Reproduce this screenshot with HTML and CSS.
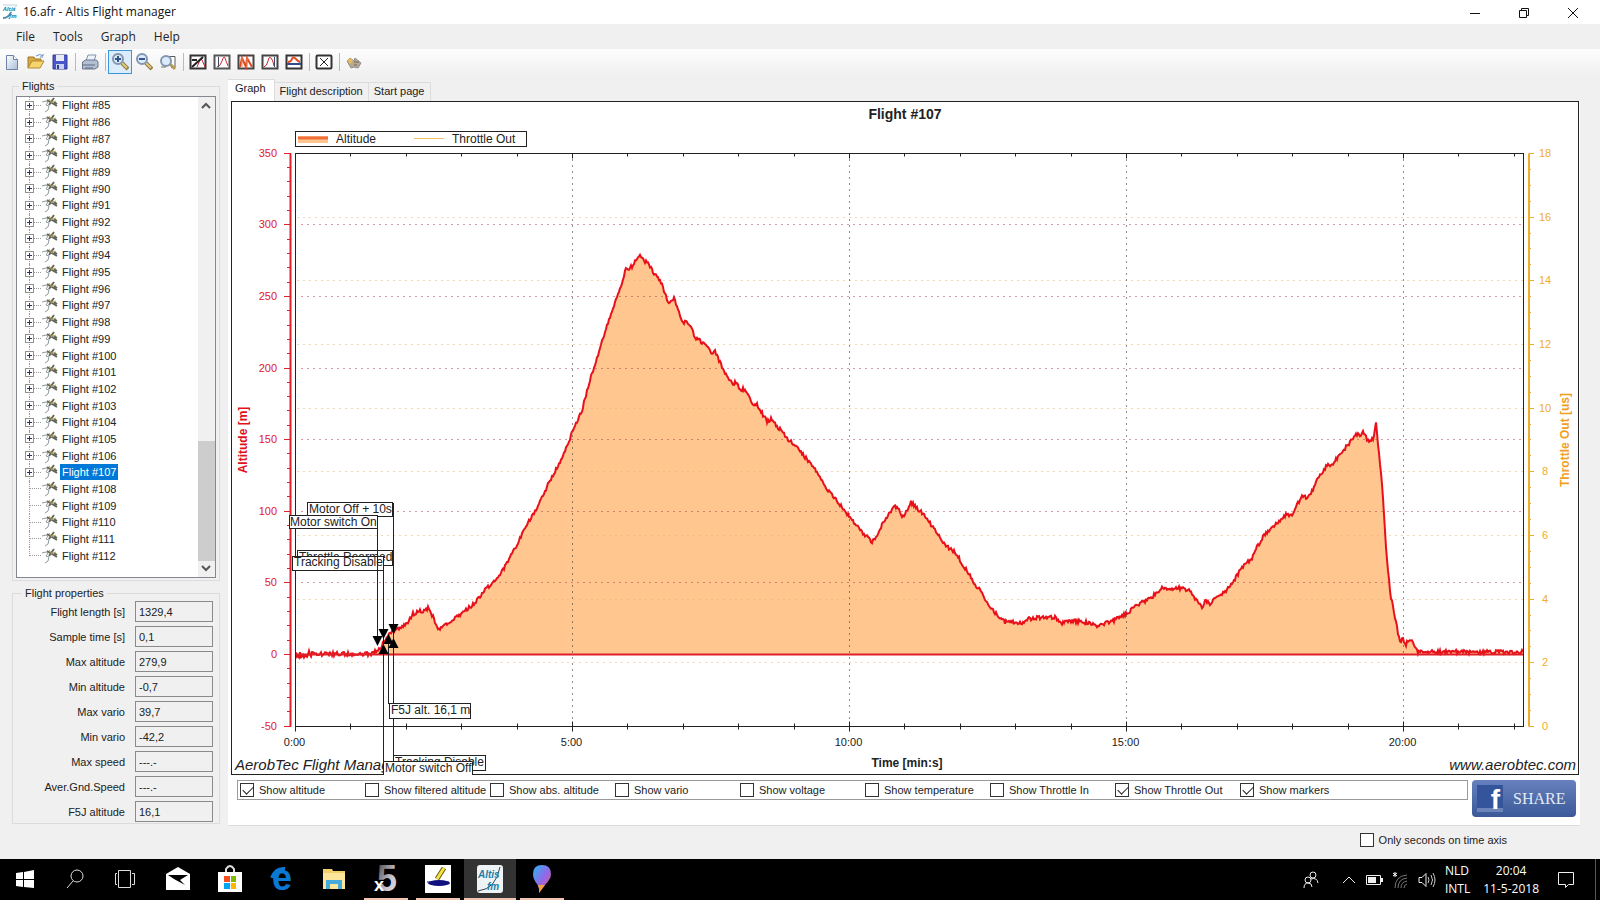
FILE: index.html
```
<!DOCTYPE html>
<html lang="en">

<head>
    <meta charset="utf-8">
    <title>16.afr - Altis Flight manager</title>
    <link rel="stylesheet" href="styles.css">
</head>

<body>
    <!-- shared icons -->
    <svg class="hide" width="0" height="0">
        <linearGradient id="gPage" x1="0" y1="0" x2="1" y2="1">
            <stop offset="0" stop-color="#fff"/><stop offset="1" stop-color="#a9bdd8"/>
        </linearGradient>
        <linearGradient id="gFive" x1="0" y1="0" x2="1" y2="1">
            <stop offset="0" stop-color="#333"/><stop offset="0.6" stop-color="#c6c6d2"/><stop offset="1" stop-color="#e6e6f2"/>
        </linearGradient>
        <linearGradient id="gPin" x1="0" y1="0" x2="1" y2="1">
            <stop offset="0" stop-color="#28b8f4"/><stop offset="0.5" stop-color="#8d6be8"/><stop offset="1" stop-color="#f0508c"/>
        </linearGradient>
        <symbol id="plane" viewBox="0 0 18 16">
            <path d="M1 5l4-1 2 1-2 3 3 1-1 4-3 2" fill="none" stroke="#8f9a9c"/>
            <path d="M6 3l10 6M8 8l5-7M13 5l3 2" fill="none" stroke="#66685a" stroke-width="2"/>
            <path d="M8 2l3 4M12 5l3-1" fill="none" stroke="#b9a94a"/>
        </symbol>
        <symbol id="logo" viewBox="0 0 16 16">
            <path d="M1 1h14L3 15" fill="none" stroke="#b9d4df"/>
            <text x="1" y="7" font-size="6" font-weight="bold" font-style="italic" fill="#1c7fa8">Altis</text>
            <path d="M1 14q6 0 8-6" fill="none" stroke="#4c8fb0" stroke-width="2"/>
            <text x="7" y="14" font-size="6" font-weight="bold" font-style="italic" fill="#1c7fa8">fm</text>
        </symbol>
        <symbol id="lens" viewBox="0 0 18 18">
            <path d="M11 10l6 6" stroke="#8d7a48" stroke-width="4"/>
            <path d="M11 10l5 5" stroke="#e5c878" stroke-width="2"/>
            <circle cx="7" cy="6" r="5" fill="#dcebfb" stroke="#8296b0" stroke-width="2"/>
        </symbol>
    </svg>

    <header class="titlebar">
        <svg class="app-icon" width="16" height="16"><use href="#logo"/></svg>
        <span class="title">16.afr - Altis Flight manager</span>
        <button type="button" aria-label="Minimize"><svg width="12" height="12"><path d="M1 6.500h10" stroke="#111"/></svg></button>
        <button type="button" aria-label="Restore"><svg width="12" height="12"><path d="M1.500 3.500h7v7h-7zM3.500 3.500v-2h7v7h-2" fill="none" stroke="#111"/></svg></button>
        <button type="button" aria-label="Close"><svg width="12" height="12"><path d="M1 1l10 10M11 1l-10 10" stroke="#111"/></svg></button>
    </header>

    <nav class="menu">
        <button type="button">File</button>
        <button type="button">Tools</button>
        <button type="button">Graph</button>
        <button type="button">Help</button>
    </nav>

    <div class="toolbar">
        <button type="button" aria-label="New"><svg width="18" height="18"><path d="M3.500 2.500h7l4 4v10h-11z" fill="url(#gPage)" stroke="#6d83a6"/><path d="M10.500 2.500v4h4" fill="#fff" stroke="#6d83a6"/></svg></button>
        <button type="button" aria-label="Open"><svg width="18" height="18"><path d="M1 15V4h6l1 2h6v3" fill="#d9a93c" stroke="#9c7a2c"/><path d="M1 15l4-7h12l-4 7z" fill="#f8d56c" stroke="#b08a34"/><path d="M9 3q4-3 7 0v-2m0 3h-3" fill="none" stroke="#6d8fc4"/></svg></button>
        <button type="button" aria-label="Save"><svg width="18" height="18"><path d="M2 2h14v14H2z" fill="#4a55c8" stroke="#343c92"/><path d="M5 2h8v6H5z" fill="#e8ecfa"/><path d="M5 11h8v5H5z" fill="#c9cff0"/><path d="M6 12h2v4H6z" fill="#343c92"/></svg></button>
        <i class="sep"></i>
        <button type="button" aria-label="Print"><svg width="18" height="18"><path d="M5 8l2-6h8l-2 6z" fill="#eef3fb" stroke="#8491a8"/><path d="M1.500 9l3-2h11l1.500 2v5l-3 2h-12.500z" fill="#b4c0d2" stroke="#68758c"/><path d="M2 12h12M4 15h8" stroke="#5c6880"/></svg></button>
        <i class="sep"></i>
        <button type="button" class="on" aria-label="Zoom in"><svg width="18" height="18"><use href="#lens"/><path d="M4 6h6M7 3v6" stroke="#33558c" stroke-width="2"/></svg></button>
        <button type="button" aria-label="Zoom out"><svg width="18" height="18"><use href="#lens"/><path d="M4 6h6" stroke="#33558c" stroke-width="2"/></svg></button>
        <button type="button" aria-label="Zoom all"><svg width="18" height="18"><path d="M8 3.500h8v11h-4" fill="#fff" stroke="#5b5b5b"/><path d="M11 11l5 5" stroke="#b89b54" stroke-width="3"/><circle cx="7" cy="8" r="5" fill="#dcebfb" stroke="#8296b0" stroke-width="2"/><path d="M2 14h5" stroke="#777"/></svg></button>
        <i class="sep"></i>
        <button type="button" aria-label="Altitude graph"><svg width="18" height="18"><path d="M1.500 2.500h15v13h-15z" fill="#fff" stroke="#333" stroke-width="2"/><path d="M8 14l3-7q1-3 2 0l3 7" fill="none" stroke="#d02030"/><path d="M3 14L14 4M3 7h5" stroke="#222" stroke-width="2"/></svg></button>
        <button type="button" aria-label="Graph start"><svg width="18" height="18"><path d="M1.500 2.500h15v13h-15z" fill="#fff" stroke="#555" stroke-width="2"/><path d="M4 14q3 0 5-6t3-3 3 8" fill="none" stroke="#d02030"/><path d="M5.500 4v10" stroke="#446"/></svg></button>
        <button type="button" aria-label="Graph peaks"><svg width="18" height="18"><path d="M1.500 2.500h15v13h-15z" fill="#fff" stroke="#444" stroke-width="2"/><path d="M3 14l2-9 4 9 1-9 5 9" fill="none" stroke="#e04a20" stroke-width="2"/><path d="M5 4v10M10 4v10" stroke="#e88a60"/></svg></button>
        <button type="button" aria-label="Graph end"><svg width="18" height="18"><path d="M1.500 2.500h15v13h-15z" fill="#fff" stroke="#444" stroke-width="2"/><path d="M3 14q3-1 4-6t3-3 3 8" fill="none" stroke="#d02030"/><path d="M13.500 4v10" stroke="#446"/></svg></button>
        <button type="button" aria-label="Graph section"><svg width="18" height="18"><path d="M1.500 2.500h15v13h-15z" fill="#fff" stroke="#333" stroke-width="2"/><path d="M3 9q3 0 4-3t4 0 4 3" fill="none" stroke="#e04a20" stroke-width="2"/><path d="M2 11h14" stroke="#334a90" stroke-width="2"/></svg></button>
        <i class="sep"></i>
        <button type="button" aria-label="Clear"><svg width="18" height="18"><rect x="1.500" y="2.500" width="15" height="13" rx="1" fill="#fff" stroke="#333" stroke-width="2"/><path d="M5 5l8 8M13 5l-8 8" stroke="#222"/></svg></button>
        <i class="sep"></i>
        <button type="button" aria-label="Device"><svg width="18" height="18"><path d="M2 8l3-3 4 3 1-3 6 5-3 5-4-1-3 1z" fill="#b9a98a" stroke="#8d8d94"/><path d="M2 7l4-2 2 3-3 3z" fill="#e8bc5c"/><path d="M9 9h5M9 12h3" stroke="#667"/></svg></button>
    </div>

    <main class="main">
        <aside class="side">
            <fieldset>
                <legend>Flights</legend>
                <div class="tree">
                    <ul id="flightList"></ul>
                    <div class="scroll">
                        <svg width="16" height="16"><path d="M4 11l4-4 4 4" fill="none" stroke="#555" stroke-width="2"/></svg>
                        <div class="thumb"></div>
                        <svg width="16" height="16"><path d="M4 5l4 4 4-4" fill="none" stroke="#555" stroke-width="2"/></svg>
                    </div>
                </div>
            </fieldset>
            <fieldset class="props">
                <legend>Flight properties</legend>
                <label for="length">Flight length [s]</label><input type="text" id="length" value="1329,4" readonly>
                <label for="sample">Sample time [s]</label><input type="text" id="sample" value="0,1" readonly>
                <label for="maxAlt">Max altitude</label><input type="text" id="maxAlt" value="279,9" readonly>
                <label for="minAlt">Min altitude</label><input type="text" id="minAlt" value="-0,7" readonly>
                <label for="maxVario">Max vario</label><input type="text" id="maxVario" value="39,7" readonly>
                <label for="minVario">Min vario</label><input type="text" id="minVario" value="-42,2" readonly>
                <label for="maxSpeed">Max speed</label><input type="text" id="maxSpeed" value="---.-" readonly>
                <label for="avgSpeed">Aver.Gnd.Speed</label><input type="text" id="avgSpeed" value="---.-" readonly>
                <label for="f5j">F5J altitude</label><input type="text" id="f5j" value="16,1" readonly>
            </fieldset>
        </aside>

        <section class="content">
            <div class="tabs">
                <button type="button" class="active">Graph</button>
                <button type="button">Flight description</button>
                <button type="button">Start page</button>
            </div>
            <div class="panel">
                <svg id="chart" class="chart" viewBox="231 101 1348 674"></svg>
                <div class="options">
                    <div class="checks">
                        <label><input type="checkbox" checked>Show altitude</label>
                        <label><input type="checkbox">Show filtered altitude</label>
                        <label><input type="checkbox">Show abs. altitude</label>
                        <label><input type="checkbox">Show vario</label>
                        <label><input type="checkbox">Show voltage</label>
                        <label><input type="checkbox">Show temperature</label>
                        <label><input type="checkbox">Show Throttle In</label>
                        <label><input type="checkbox" checked>Show Throttle Out</label>
                        <label><input type="checkbox" checked>Show markers</label>
                    </div>
                    <button type="button" class="share"><span class="fb">f</span>SHARE</button>
                </div>
            </div>
            <div class="seconds">
                <label><input type="checkbox">Only seconds on time axis</label>
            </div>
        </section>
    </main>

    <footer class="taskbar">
        <button type="button" class="sys" aria-label="Start"><svg width="18" height="18"><path d="M0 3l7-1v7H0zM8 2l10-2v9H8zM0 10h7v7l-7-1zM8 10h10v8l-10-1z" fill="#fff"/></svg></button>
        <button type="button" class="sys" aria-label="Search"><svg width="18" height="20"><circle cx="11" cy="7" r="6" fill="none" stroke="#ddd"/><path d="M7 12l-6 7" stroke="#ddd"/></svg></button>
        <button type="button" class="sys" aria-label="Task view"><svg width="20" height="18"><path d="M3.500 .5h12v17h-12zM2 3.500H.5v11H2M17 3.500h2.500v11H17" fill="none" stroke="#ddd"/></svg></button>
        <button type="button" class="first" aria-label="Mail"><svg width="26" height="24"><path d="M1 7l12-7 12 7v16H1z" fill="#fff"/><path d="M3 8h20l-8 5 5 5-11-6z" fill="#000"/></svg></button>
        <button type="button" aria-label="Store"><svg width="26" height="28"><path d="M9 8V4q4-6 8 0v4" fill="none" stroke="#ddd" stroke-width="2"/><path d="M1 7h24v20H1z" fill="#fff"/><path d="M7 11h6v6H7z" fill="#f25022"/><path d="M14 11h5v6h-5z" fill="#7fba00"/><path d="M7 18h6v6H7z" fill="#00a4ef"/><path d="M14 18h5v6h-5z" fill="#ffb900"/></svg></button>
        <button type="button" aria-label="Edge"><svg width="26" height="40"><text x="3" y="31" font-size="36" font-weight="bold" fill="#0a78d4">e</text><path d="M3 19q4-10 13-9" fill="none" stroke="#0a78d4" stroke-width="4"/></svg></button>
        <button type="button" aria-label="Explorer"><svg width="24" height="24"><path d="M1 2h9l1 2h12v18H1z" fill="#f5cf6b"/><path d="M1 6h22v16H1z" fill="#fde69b"/><path d="M4 22v-9h16v9h-4v-5H8v5z" fill="#45aadc"/></svg></button>
        <button type="button" class="run" aria-label="XFLR5"><svg width="26" height="40"><text x="4" y="32" font-size="36" font-weight="bold" fill="url(#gFive)">5</text><text x="1" y="32" font-size="18" font-weight="bold" fill="#fff">x</text></svg></button>
        <button type="button" class="run" aria-label="Editor"><svg width="26" height="30"><path d="M0 1h26v28H0z" fill="#fff"/><ellipse cx="14" cy="19" rx="11" ry="3" fill="#101080"/><path d="M2 18h22" stroke="#101080"/><path d="M12 15l7-11" stroke="#665a10" stroke-width="5"/><path d="M12 15l7-11" stroke="#f4e040" stroke-width="3"/></svg></button>
        <button type="button" class="run current" aria-label="Altis"><svg width="26" height="30"><rect y="1" width="26" height="28" rx="3" fill="#eef4f6"/><path d="M23 3q-4 22-22 24" fill="none" stroke="#345" stroke-width="1"/><text x="1" y="14" font-size="10" font-weight="bold" font-style="italic" fill="#1c7fa8">Altis</text><text x="10" y="26" font-size="10" font-weight="bold" font-style="italic" fill="#1c7fa8">fm</text></svg></button>
        <button type="button" class="run" aria-label="Paint 3D"><svg width="20" height="30"><path d="M10 1q9 0 9 9 0 5-6 11l-6 8q1-4-2-9-4-5-4-10 0-9 9-9z" fill="url(#gPin)"/><path d="M7 29q1-4-1-8l7 0z" fill="#f4a03c"/></svg></button>

        <div class="tray">
            <svg width="18" height="18"><g fill="none" stroke="#eee" stroke-width="1"><circle cx="11" cy="4" r="3"/><circle cx="6" cy="9" r="3"/><path d="M2 17q0-5 4-5t4 4M9 8q6-2 7 4"/></g></svg>
            <svg class="chev" width="16" height="16"><path d="M2 11l6-6 6 6" fill="none" stroke="#eee"/></svg>
            <svg width="17" height="12"><path d="M.5 1.500h14v9H.5z" fill="none" stroke="#eee"/><path d="M2 3h8v6H2zM15 4h2v4h-2z" fill="#eee"/></svg>
            <svg width="17" height="18"><g fill="none" stroke="#777"><path d="M3 17Q3 5 15 4M6 17q0-9 9-10M9 17q0-6 6-7M12 17q0-3 3-4"/></g><path d="M3 1v5M1 2l4 3M5 2L1 5" stroke="#fff"/></svg>
            <svg width="18" height="16"><path d="M1 5.500h3l4-4v13l-4-4H1z" fill="none" stroke="#eee"/><path d="M10 5q2 3 0 6M13 3q3 5 0 10M15 1q4 7 0 14" fill="none" stroke="#ccc"/></svg>
            <div class="lang">NLD<br>INTL</div>
            <div class="clock">20:04<br>11-5-2018</div>
            <svg width="18" height="18"><path d="M1.500 1.500h15v12h-5l-3 3v-3h-7z" fill="none" stroke="#eee"/></svg>
            <i class="desk"></i>
        </div>
    </footer>

    <script src="chart.js"></script>
</body>

</html>
```
FILE: styles.css
```
*{
    box-sizing: border-box;
}

body{
    margin: 0;
    min-height: 100vh;
    display: flex;
    flex-direction: column;
    background-color: #f0f0f0;
    color: #222;
    font-family: "Liberation Sans", Arial, sans-serif;
    font-size: 11px;
    line-height: 14px;
}

button{
    padding: 0;
    border: none;
    background: none;
    color: inherit;
    font: inherit;
}

svg{
    flex: none;
}

.hide{
    position: absolute;
}

/* title, menu, toolbar */
.titlebar{
    display: flex;
    align-items: center;
    height: 24px;
    padding: 0 3px 0 2px;
    background-color: #fff;
    font-family: "Open Sans", sans-serif;
    font-size: 12px;
    color: #111;
}

.title{
    flex: 1;
    margin-left: 5px;
}

.titlebar button{
    width: 49px;
    height: 24px;
}

.titlebar button svg{
    vertical-align: middle;
}

.menu{
    display: flex;
    height: 25px;
    padding-left: 7px;
    font-family: "Open Sans", sans-serif;
    font-size: 12px;
}

.menu button{
    padding: 0 9px;
}

.toolbar{
    display: flex;
    align-items: center;
    height: 26px;
    background: linear-gradient(#fdfdfd, #f0f0f0);
}

.toolbar button{
    display: flex;
    align-items: center;
    justify-content: center;
    width: 24px;
    height: 24px;
}

.toolbar .on{
    border: 1px solid #3c96dc;
    background-color: #dcecfa;
}

.sep{
    width: 1px;
    height: 18px;
    margin: 0 2px 0 3px;
    background-color: #bbb;
}

/* left side */
.main{
    display: flex;
    flex: 1;
    padding: 4px 20px 0 12px;
}

.side{
    width: 208px;
    margin-right: 8px;
}

fieldset{
    margin: 0 0 5px;
    padding: 3px 3px 2px;
    border: 1px solid #dcdcdc;
}

legend{
    margin-left: 3px;
    padding: 0 3px;
    height: 14px;
    text-align: left;
}

.tree{
    display: flex;
    height: 482px;
    border: 1px solid #828790;
    background-color: #fff;
}

.tree ul{
    flex: 1;
    display: grid;
    grid-auto-rows: 1fr;
    height: 467px;
    margin: 0;
    padding: 0 0 0 8px;
    list-style: none;
}

.tree li{
    position: relative;
    display: flex;
    align-items: center;
}

.tree li::before{
    content: "";
    position: absolute;
    left: 4px;
    top: 0;
    bottom: 0;
    border-left: 1px dotted #999;
}

.tree li:last-child::before{
    bottom: 50%;
}

.tree li::after{
    content: "";
    position: absolute;
    left: 4px;
    width: 12px;
    border-top: 1px dotted #999;
}

.expand{
    position: relative;
    z-index: 1;
    width: 9px;
    height: 9px;
    border: 1px solid #919191;
    background: linear-gradient(#335, #335) center / 5px 1px no-repeat, linear-gradient(#335, #335) center / 1px 5px no-repeat, #fff;
}

.none{
    width: 9px;
}

.plane{
    margin: 0 1px 0 7px;
}

.name{
    padding: 0 2px;
    line-height: 16px;
}

.selected .name{
    background-color: #0078d7;
    color: #fff;
}

.scroll{
    display: flex;
    flex-direction: column;
    width: 17px;
    background-color: #f0f0f0;
}

.thumb{
    height: 120px;
    margin-top: auto;
    background-color: #cdcdcd;
}

.props{
    display: grid;
    grid-template-columns: 1fr 78px;
    grid-auto-rows: 21px;
    gap: 4px 10px;
    padding: 1px 6px 1px;
    align-items: center;
    text-align: right;
}

.props input{
    width: 100%;
    height: 21px;
    padding: 0 3px;
    border: 1px solid #8a8a8a;
    background-color: #f0f0f0;
    color: #222;
    font: inherit;
}

/* graph side */
.content{
    flex: 1;
}

.tabs{
    display: flex;
    align-items: flex-end;
    height: 22px;
}

.tabs button{
    height: 19px;
    padding: 0 5px 3px;
    border: 1px solid #dcdcdc;
    border-left: none;
    border-bottom: none;
}

.tabs .active{
    height: 22px;
    padding: 0 8px 5px 7px;
    background-color: #fff;
}

.panel{
    padding: 0 1px 8px 3px;
    border-bottom: 1px solid #dcdcdc;
    background-color: #fff;
}

.chart{
    display: block;
    width: 100%;
    height: auto;
}

.options{
    display: flex;
    align-items: flex-start;
    gap: 4px;
    padding: 5px 3px 0 6px;
}

.checks{
    flex: 1;
    display: flex;
    height: 20px;
    padding-left: 2px;
    border: 1px solid #9a9a9a;
}

.checks label{
    width: 125px;
    white-space: nowrap;
}

label{
    display: flex;
    align-items: center;
}

.props label{
    justify-content: flex-end;
}

input[type=checkbox]{
    appearance: none;
    flex: none;
    width: 14px;
    height: 14px;
    margin: 0 5px 0 0;
    border: 1px solid #333;
    background-color: #fff;
}

input[type=checkbox]:checked::after{
    content: "";
    display: block;
    width: 9px;
    height: 5px;
    margin: 2px 0 0 2px;
    border-left: 1px solid #222;
    border-bottom: 1px solid #222;
    transform: rotate(-45deg);
}

.share{
    display: flex;
    align-items: center;
    width: 104px;
    height: 37px;
    padding-left: 5px;
    border-radius: 4px;
    background: linear-gradient(#6681bd, #3b5998);
    color: #e4eaf6;
    font-family: "Liberation Serif", serif;
    font-size: 16px;
}

.fb{
    width: 26px;
    height: 27px;
    margin-right: 10px;
    padding-right: 3px;
    border-bottom: 4px solid #6d84b8;
    background-color: #34559c;
    color: #fff;
    font: bold 28px/30px "Liberation Sans", Arial, sans-serif;
    text-align: right;
}

.seconds{
    display: flex;
    justify-content: flex-end;
    padding: 7px 73px 12px 0;
}

/* chart texts */
.chart text{
    font-size: 12px;
    fill: #222;
}

.chart .red{
    font-size: 11px;
    fill: #e0202c;
}

.chart .orange{
    font-size: 11px;
    fill: #f0ac2c;
}

.chart .time{
    font-size: 11px;
}

.chart .bold{
    font-weight: bold;
}

.chart .head{
    font-size: 14px;
    font-weight: bold;
}

.chart .brand{
    font-size: 15px;
    font-style: italic;
}

.chart .redtitle{
    font-weight: bold;
    fill: #e0101c;
}

.chart .orangetitle{
    font-weight: bold;
    fill: #f0a01c;
}

/* task bar */
.taskbar{
    display: flex;
    height: 42px;
    background-color: #000;
    color: #fff;
}

.taskbar button{
    display: flex;
    align-items: center;
    justify-content: center;
    width: 52px;
    border-bottom: 3px solid transparent;
}

.taskbar .sys{
    width: 50px;
}

.taskbar .first{
    margin-left: 2px;
}

.taskbar .run{
    width: 44px;
    margin: 0 4px;
    border-bottom-color: #f2c4b0;
}

.taskbar .current{
    width: 52px;
    margin: 0;
    background-color: #333;
}

.tray{
    display: flex;
    align-items: center;
    gap: 9px;
    margin-left: auto;
    padding-right: 4px;
    font-family: "Open Sans", sans-serif;
    font-size: 12px;
    line-height: 18px;
}

.chev{
    margin-left: 12px;
}

.clock{
    margin: 0 9px 0 4px;
    text-align: center;
}

.desk{
    align-self: stretch;
    margin-left: 11px;
    border-left: 1px solid #555;
}
```
FILE: chart.js
```
var chart = document.getElementById("chart");
var list = document.getElementById("flightList");

// flight tree, only flights up to 107 can be expanded
for (var n = 85; n <= 112; n++) {
    var li = document.createElement("li");
    if (n == 107) li.className = "selected";
    li.innerHTML = (n <= 107 ? '<button type="button" class="expand" aria-label="Expand"></button>' : '<span class="none"></span>') +
        '<svg class="plane" width="18" height="16"><use href="#plane"/></svg><span class="name">Flight #' + n + '</span>';
    list.appendChild(li);
}

var LEFT = 295.5, RIGHT = 1523.5, TOP = 153.5, BOTTOM = 726.5, ZERO = 654.5;
var out = "";

function line(x1, y1, x2, y2, color, extra) {
    out += '<line x1="' + x1 + '" y1="' + y1 + '" x2="' + x2 + '" y2="' + y2 + '" stroke="' + color + '" ' + (extra || "") + '/>';
}

function text(x, y, cls, str, anchor) {
    out += '<text x="' + x + '" y="' + y + '" class="' + cls + '" text-anchor="' + (anchor || "start") + '">' + str + '</text>';
}

function box(x, y, w, h) {
    out += '<rect x="' + x + '" y="' + y + '" width="' + w + '" height="' + h + '" fill="#fff" stroke="#222"/>';
}

function arrow(x, y, dir) {
    out += '<path d="M' + (x - 5) + ' ' + y + 'h10l-5 ' + (10 * dir) + 'z" fill="#000"/>';
}

// altitude curve
var points = [
    [296,654],[372,654],[375,651],[380,648],[385,640],[388,635],[392,632],[400,628],[407,623],[413,614],[420,611],[425,611],
    [428,608],[433,617],[437,627],[440,628],[450,623],[457,617],[468,609],[477,600],[487,588],[493,582],[503,570],[510,558],
    [517,545],[525,528],[533,515],[548,485],[555,472],[562,458],[572,433],[582,410],[590,380],[595,365],[600,347],[608,323],
    [617,298],[622,282],[626,269],[632,267],[639,255],[647,263],[657,277],[662,285],[668,303],[674,298],[683,322],[690,324],
    [695,338],[703,343],[711,352],[715,352],[725,373],[733,383],[737,383],[739,390],[745,389],[753,405],[757,404],[767,422],
    [771,419],[778,427],[787,438],[798,449],[812,465],[823,483],[833,497],[843,508],[849,517],[863,533],[872,542],[875,540],
    [883,523],[895,505],[903,517],[911,502],[922,513],[933,527],[947,547],[955,552],[977,587],[980,590],[987,603],[998,616],
    [1005,622],[1022,623],[1027,619],[1037,618],[1055,617],[1062,623],[1073,621],[1090,623],[1098,626],[1113,621],[1128,613],
    [1138,604],[1150,599],[1162,588],[1177,588],[1188,590],[1197,600],[1202,608],[1205,600],[1211,604],[1215,597],[1225,592],
    [1233,582],[1243,566],[1252,558],[1257,547],[1265,534],[1278,523],[1287,514],[1292,515],[1295,508],[1302,497],[1307,497],
    [1313,490],[1318,477],[1327,466],[1333,463],[1345,448],[1357,434],[1360,436],[1363,430],[1368,441],[1373,439],[1376,424],
    [1378,443],[1382,483],[1386,547],[1390,592],[1400,643],[1403,639],[1406,644],[1410,639],[1415,647],[1418,652],[1523,652]
];
var seed = 7;
function noise() {
    seed = (seed * 1103 + 12345) % 65536;
    return seed / 65536 - 0.5;
}
var d = "M296 654";
for (var i = 1; i < points.length; i++) {
    var a = points[i - 1], b = points[i];
    for (var x = a[0]; x < b[0]; x++) {
        var y = a[1] + (b[1] - a[1]) * (x - a[0]) / (b[0] - a[0]);
        d += "L" + x + " " + (y + noise() * (x < 312 ? 7 : 4)).toFixed(1);
    }
}
d += "L1523 652";

out += '<rect x="231.5" y="101.5" width="1347" height="673" fill="#fff" stroke="#222"/>';
out += '<path d="' + d + 'V654H296Z" fill="#ffc690"/>';

// grid
var gx, gy;
for (var v = 50; v <= 300; v += 50) {
    gy = Math.round(ZERO - v * 1.4325 - 0.5) + 0.5;
    line(LEFT + 6, gy, RIGHT, gy, "#a83c48", 'stroke-dasharray="1 5"');
}
for (v = 2; v <= 16; v += 2) {
    gy = Math.round(BOTTOM - v * 31.83 - 0.5) + 0.5;
    line(LEFT + 2, gy, RIGHT, gy, "#e0b468", 'stroke-dasharray="1 5"');
}
for (v = 5; v <= 20; v += 5) {
    gx = Math.round(LEFT + v * 55.4 - 0.5) + 0.5;
    line(gx, TOP + 6, gx, BOTTOM, "#222", 'stroke-dasharray="1 5"');
}

out += '<path d="' + d + '" fill="none" stroke="#e8101a" stroke-width="2"/>';
line(LEFT, 654.5, RIGHT, 654.5, "#e02028", 'stroke-width="2"');
out += '<rect x="295.5" y="153.5" width="1228" height="573" fill="none" stroke="#222"/>';

// left axis
line(290.5, TOP, 290.5, BOTTOM, "#e0202c", 'stroke-width="2"');
for (v = -50; v <= 350; v += 10) {
    gy = Math.round(ZERO - v * 1.4325 - 0.5) + 0.5;
    line(v % 50 == 0 ? 284 : 287, gy, 291, gy, "#e0202c");
    if (v % 50 == 0) text(277, gy + 3, "red", v, "end");
}
// right axis
line(1529, TOP, 1529, BOTTOM, "#f0ac2c", 'stroke-width="2"');
for (v = 0; v <= 36; v++) {
    gy = Math.round(BOTTOM - v * 15.917 - 0.5) + 0.5;
    line(1529, gy, v % 4 == 0 ? 1534 : 1531, gy, "#f0ac2c");
    if (v % 4 == 0) text(1545, gy + 3, "orange", v / 2, "middle");
}
// time axis
for (v = 0; v <= 22; v++) {
    gx = Math.round(LEFT + v * 55.4 - 0.5) + 0.5;
    var big = v % 5 == 0 ? 5 : 3;
    line(gx, BOTTOM - big, gx, BOTTOM + big, "#222");
    line(gx, TOP, gx, TOP + big, "#222");
    if (v % 5 == 0) text(gx - 1, 746, "time", v + ":00", "middle");
}

text(905, 119, "head", "Flight #107", "middle");
text(907, 767, "bold", "Time [min:s]", "middle");
text(235, 770, "brand", "AerobTec Flight Manager");
text(1576, 770, "brand", "www.aerobtec.com", "end");
out += '<text class="redtitle" text-anchor="middle" transform="translate(247 440) rotate(-90)">Altitude [m]</text>';
out += '<text class="orangetitle" text-anchor="middle" transform="translate(1569 440) rotate(-90)">Throttle Out [us]</text>';

// legend
box(295.5, 131.5, 231, 15);
out += '<rect x="298" y="136" width="30" height="7" fill="#ffc690"/>';
line(298, 138, 328, 138, "#f0703c", 'stroke-width="3"');
text(336, 143, "", "Altitude");
line(414, 138.5, 444, 138.5, "#f0c060");
text(452, 143, "", "Throttle Out");

// markers
box(307.5, 502.5, 85, 14);
text(309, 513, "", "Motor Off + 10s");
box(289.5, 515.5, 88, 13);
text(290, 526, "", "Motor switch On");
box(297.5, 550.5, 95, 15);
text(299, 561, "", "Throttle Rearmed");
box(292.5, 556.5, 91, 14);
text(294, 566, "", "Tracking Disable");
line(377.5, 516, 377.5, 637, "#222");
line(383.5, 557, 383.5, 775, "#222");
line(393.5, 503, 393.5, 756, "#222");
line(388.5, 635, 388.5, 704, "#222");
arrow(377.5, 636, 1);
arrow(383.5, 629, 1);
arrow(393.5, 624, 1);
arrow(383.5, 654, -1);
arrow(388.5, 644, -1);
arrow(393.5, 648, -1);
box(389.5, 703.5, 81, 15);
text(391, 714, "", "F5J alt. 16,1 m");
box(393.5, 755.5, 92, 15);
text(395, 766, "", "Tracking Disable");
out += '<rect x="384" y="762" width="88" height="14" fill="#fff"/>';
out += '<path d="M383.5 775V761.5H472.5V775" fill="none" stroke="#222"/>';
text(385, 772, "", "Motor switch Off");

chart.innerHTML = out;
```
